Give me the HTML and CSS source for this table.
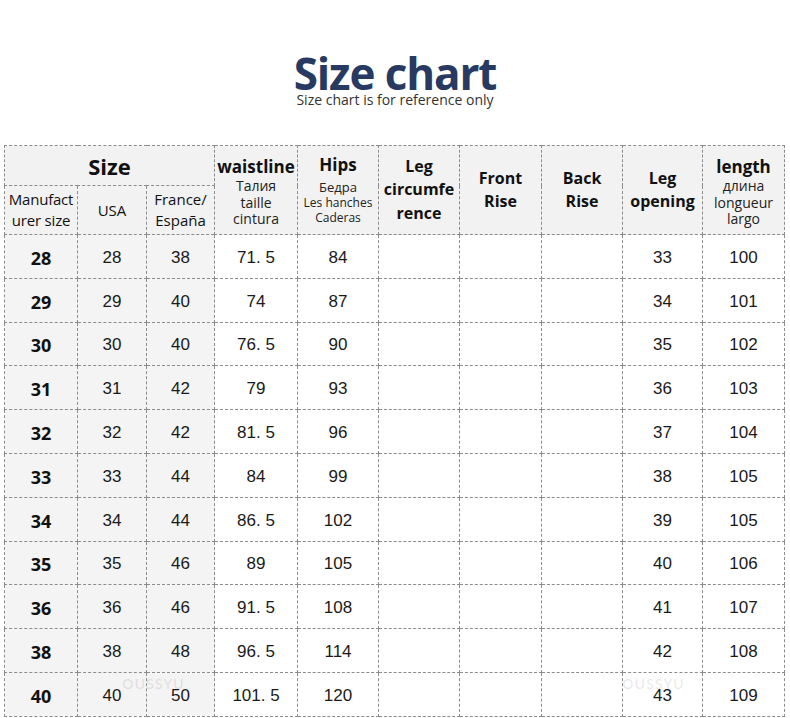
FILE: index.html
```html
<!DOCTYPE html>
<html>
<head>
<meta charset="utf-8">
<link rel="stylesheet" href="styles.css">
</head>
<body>
<div class="page">
  <h1 class="title">Size chart</h1>
  <p class="subtitle">Size chart is for reference only</p>
  <div class="chart">
    <table class="sizes">
      <colgroup>
        <col class="c1"><col class="c2"><col class="c3"><col class="c4"><col class="c5">
        <col class="c6"><col class="c7"><col class="c8"><col class="c9"><col class="c10">
      </colgroup>
      <thead>
        <tr class="h1row">
          <th colspan="3" class="size-head">Size</th>
          <th rowspan="2" class="multi"><div class="bold17">waistline</div><div class="sub14">Талия<br>taille<br>cintura</div></th>
          <th rowspan="2" class="multi hips"><div class="bold17">Hips</div><div class="sub13">Бедра</div><div class="sub12">Les hanches<br>Caderas</div></th>
          <th rowspan="2" class="bold16">Leg<br>circumfe<br>rence</th>
          <th rowspan="2" class="bold16 two">Front<br>Rise</th>
          <th rowspan="2" class="bold16 two">Back<br>Rise</th>
          <th rowspan="2" class="bold16 two">Leg<br>opening</th>
          <th rowspan="2" class="multi"><div class="bold17">length</div><div class="sub14">длина<br>longueur<br>largo</div></th>
        </tr>
        <tr class="h2row">
          <th class="sub15 manu">Manufact<br>urer size</th>
          <th class="sub15">USA</th>
          <th class="sub15">France/<br>España</th>
        </tr>
      </thead>
      <tbody>
        <tr><td class="k">28</td><td class="g">28</td><td class="g">38</td><td>71. 5</td><td>84</td><td></td><td></td><td></td><td>33</td><td>100</td></tr>
        <tr><td class="k">29</td><td class="g">29</td><td class="g">40</td><td>74</td><td>87</td><td></td><td></td><td></td><td>34</td><td>101</td></tr>
        <tr><td class="k">30</td><td class="g">30</td><td class="g">40</td><td>76. 5</td><td>90</td><td></td><td></td><td></td><td>35</td><td>102</td></tr>
        <tr><td class="k">31</td><td class="g">31</td><td class="g">42</td><td>79</td><td>93</td><td></td><td></td><td></td><td>36</td><td>103</td></tr>
        <tr><td class="k">32</td><td class="g">32</td><td class="g">42</td><td>81. 5</td><td>96</td><td></td><td></td><td></td><td>37</td><td>104</td></tr>
        <tr><td class="k">33</td><td class="g">33</td><td class="g">44</td><td>84</td><td>99</td><td></td><td></td><td></td><td>38</td><td>105</td></tr>
        <tr><td class="k">34</td><td class="g">34</td><td class="g">44</td><td>86. 5</td><td>102</td><td></td><td></td><td></td><td>39</td><td>105</td></tr>
        <tr><td class="k">35</td><td class="g">35</td><td class="g">46</td><td>89</td><td>105</td><td></td><td></td><td></td><td>40</td><td>106</td></tr>
        <tr><td class="k">36</td><td class="g">36</td><td class="g">46</td><td>91. 5</td><td>108</td><td></td><td></td><td></td><td>41</td><td>107</td></tr>
        <tr><td class="k">38</td><td class="g">38</td><td class="g">48</td><td>96. 5</td><td>114</td><td></td><td></td><td></td><td>42</td><td>108</td></tr>
        <tr><td class="k">40</td><td class="g">40</td><td class="g">50</td><td>101. 5</td><td>120</td><td></td><td></td><td></td><td>43</td><td>109</td></tr>
      </tbody>
    </table>
    <span class="mark mark-a">OUSSYU</span>
    <span class="mark mark-b">OUSSYU</span>
  </div>
</div>
</body>
</html>
```

FILE: styles.css
```css
html, body {
  margin: 0;
  padding: 0;
  background: #ffffff;
}
.page {
  width: 790px;
  padding-top: 55px;
  font-family: "Open Sans", "Liberation Sans", sans-serif;
  color: #111;
}
.title {
  margin: 0 0 2px 0;
  text-align: center;
  font-size: 44px;
  line-height: 36px;
  font-weight: 700;
  letter-spacing: -1.1px;
  color: #283a61;
}
.subtitle {
  margin: 0;
  text-align: center;
  font-size: 14px;
  line-height: 14px;
  color: #333;
}
.chart {
  position: relative;
  margin-top: 38px;
  margin-left: 4px;
  width: 781px;
}
.sizes {
  width: 780px;
  table-layout: fixed;
  border-collapse: collapse;
}
.sizes th, .sizes td {
  border: 1px dashed #8c8c8c;
  padding: 0;
  text-align: center;
  vertical-align: middle;
}
.c1 { width: 73px; }
.c2 { width: 69px; }
.c3 { width: 68px; }
.c4 { width: 83px; }
.c5 { width: 81px; }
.c6 { width: 81px; }
.c7 { width: 82px; }
.c8 { width: 81px; }
.c9 { width: 80px; }
.c10 { width: 82px; }
.sizes thead th {
  background: #f2f2f2;
  font-weight: 400;
  color: #111;
}
.sizes thead th.multi {
  padding-top: 5px;
}
.sizes thead th.hips {
  padding-top: 0;
}
.h1row { height: 40px; }
.h2row { height: 49px; }
.size-head {
  font-size: 22px;
  font-weight: 700 !important;
  line-height: 26px;
}
.bold17 {
  font-size: 17px;
  font-weight: 700;
  line-height: 20px;
}
.bold16 {
  font-size: 16px;
  font-weight: 700 !important;
  line-height: 23.5px;
}
.sub15 {
  font-size: 15px;
  line-height: 21px;
}
.manu { letter-spacing: -0.2px; }
.sub14 {
  margin-top: 1px;
  font-size: 14px;
  line-height: 16.5px;
  color: #222;
}
.sub13 {
  margin-top: 4px;
  font-size: 13px;
  line-height: 16px;
  color: #222;
}
.sub12 {
  font-size: 12px;
  line-height: 15px;
  color: #222;
}
.sizes tbody tr { height: 43.8px; }
.sizes tbody td {
  padding-top: 3px;
  font-family: "Liberation Sans", Arial, sans-serif;
  font-size: 17px;
  color: #1a1a1a;
  background: #ffffff;
}
.sizes tbody td.g {
  background: #f4f4f4;
}
.sizes tbody td.k {
  background: #f4f4f4;
  font-family: "Open Sans", "Liberation Sans", sans-serif;
  font-weight: 700;
  font-size: 18px;
  color: #111;
}
.mark {
  position: absolute;
  font-family: "Open Sans", "Liberation Sans", sans-serif;
  font-size: 15px;
  font-weight: 600;
  letter-spacing: 0.5px;
  color: rgba(0, 0, 0, 0.09);
}
.mark-a { left: 118px; top: 528px; }
.mark-b { left: 618px; top: 528px; }
```
